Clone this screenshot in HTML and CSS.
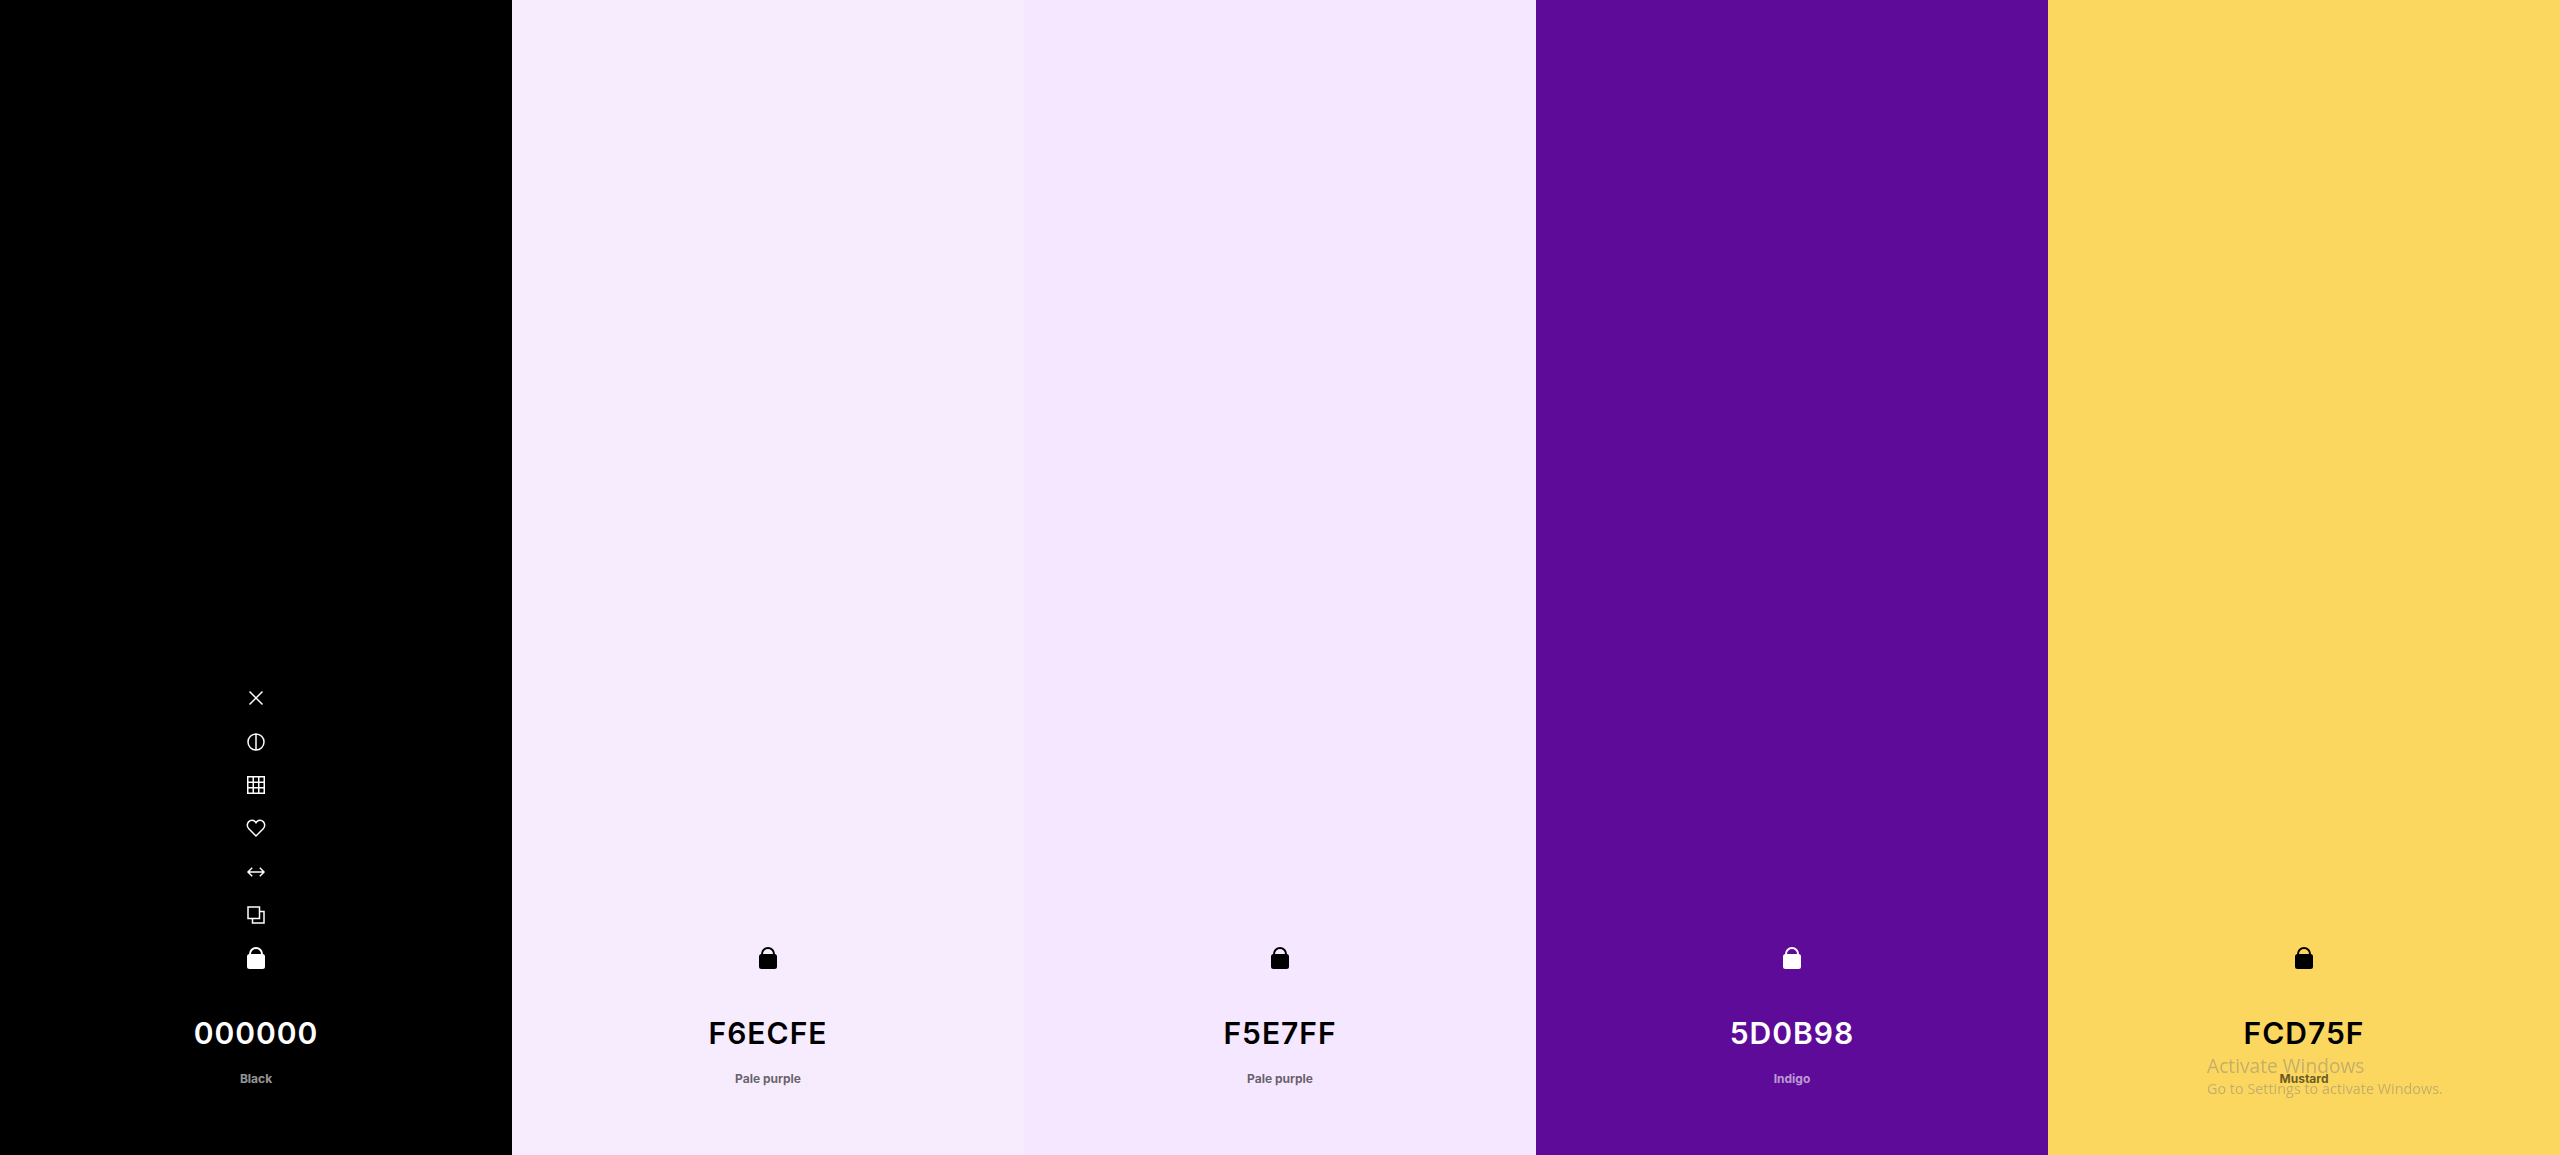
FILE: index.html
```html
<!DOCTYPE html>
<html lang="en">
<head>
<meta charset="utf-8">
<title>Palette</title>
<link rel="stylesheet" href="styles.css">
</head>
<body>
<main class="palette">
  <section class="swatch swatch-dark black">
    <div class="tools">
      <span class="tool"><svg viewBox="0 0 18 18"><path d="M2.500 2.500l13 13M15.500 2.500l-13 13"/></svg></span>
      <span class="tool"><svg viewBox="0 0 18 18"><circle cx="9" cy="9" r="8"/><path d="M9 1v16"/></svg></span>
      <span class="tool"><svg viewBox="0 0 18 18"><path d="M.75.75h16.5v16.5H.75zM6.25.75v16.5M11.75.75v16.5M.75 6.25h16.5M.75 11.75h16.5"/></svg></span>
      <span class="tool"><svg viewBox="0 0 18 18"><path d="M9 17L1.800 9.700C-.2 7.700-.1 4.500 1.800 2.600 3.800.7 6.900.9 8.500 3L9 3.700l.5-.7c1.600-2.100 4.700-2.300 6.700-.4 1.900 1.900 2 5.100 0 7.100z"/></svg></span>
      <span class="tool"><svg viewBox="0 0 18 18"><path d="M1.500 9h15M5.200 4.800L1 9l4.200 4.200M12.800 4.800L17 9l-4.200 4.200"/></svg></span>
      <span class="tool"><svg viewBox="0 0 18 18"><path d="M1 1h11.500v11.500H1zM12.500 5.500h4.500v11.500H5.500v-4.500"/></svg></span>
      <span class="tool"><svg class="lock" viewBox="0 0 18 22"><path class="shackle" d="M3 8V7a6 6 0 0 1 12 0v1"/><rect class="body" x="0" y="7" width="18" height="15" rx="2.500"/></svg></span>
    </div>
    <h2 class="hex">000000</h2>
    <p class="name">Black</p>
  </section>
  <section class="swatch pale-one">
    <div class="tools">
      <span class="tool"><svg class="lock" viewBox="0 0 18 22"><path class="shackle" d="M3 8V7a6 6 0 0 1 12 0v1"/><rect class="body" x="0" y="7" width="18" height="15" rx="2.500"/></svg></span>
    </div>
    <h2 class="hex">F6ECFE</h2>
    <p class="name">Pale purple</p>
  </section>
  <section class="swatch pale-two">
    <div class="tools">
      <span class="tool"><svg class="lock" viewBox="0 0 18 22"><path class="shackle" d="M3 8V7a6 6 0 0 1 12 0v1"/><rect class="body" x="0" y="7" width="18" height="15" rx="2.500"/></svg></span>
    </div>
    <h2 class="hex">F5E7FF</h2>
    <p class="name">Pale purple</p>
  </section>
  <section class="swatch swatch-dark indigo">
    <div class="tools">
      <span class="tool"><svg class="lock" viewBox="0 0 18 22"><path class="shackle" d="M3 8V7a6 6 0 0 1 12 0v1"/><rect class="body" x="0" y="7" width="18" height="15" rx="2.500"/></svg></span>
    </div>
    <h2 class="hex">5D0B98</h2>
    <p class="name">Indigo</p>
  </section>
  <section class="swatch mustard">
    <div class="tools">
      <span class="tool"><svg class="lock" viewBox="0 0 18 22"><path class="shackle" d="M3 8V7a6 6 0 0 1 12 0v1"/><rect class="body" x="0" y="7" width="18" height="15" rx="2.500"/></svg></span>
    </div>
    <h2 class="hex">FCD75F</h2>
    <p class="name">Mustard</p>
  </section>
</main>
<aside class="watermark">
  <p class="watermark-title">Activate Windows</p>
  <p class="watermark-text">Go to Settings to activate Windows.</p>
</aside>
</body>
</html>
```
FILE: styles.css
```css
* { box-sizing: border-box; margin: 0; padding: 0; }
html, body { height: 100%; overflow: hidden; }
body { font-family: Inter, "Liberation Sans", sans-serif; background: #000; }
.palette { display: grid; grid-template-columns: repeat(5, 1fr); height: 1155px; }
.swatch {
  display: flex; flex-direction: column; align-items: center; justify-content: flex-end;
  padding-bottom: 69px; color: #000;
}
.swatch-dark { color: #fff; }
.black { background: #000; }
.pale-one { background: #f6ecfe; }
.pale-two { background: #f5e7ff; }
.indigo { background: #5d0b98; }
.mustard { background: #fcd75f; }
.tools { display: flex; flex-direction: column; align-items: center; }
.tool { display: flex; align-items: center; justify-content: center; width: 24px; height: 43.33px; }
.tool svg { width: 18px; height: 18px; fill: none; stroke: currentColor; stroke-width: 1.500; display: block; overflow: visible; }
.tool .lock { width: 18px; height: 22px; }
.lock .body { fill: currentColor; stroke: none; }
.lock .shackle { stroke-width: 2; }
.hex { margin-top: 34px; font-size: 30px; line-height: 39px; font-weight: 600; letter-spacing: 1px; }
.name { margin-top: 18px; font-size: 12px; line-height: 15px; font-weight: 700; opacity: .58; }
.watermark { position: fixed; left: 2207px; top: 1052px; color: rgba(120, 120, 120, .42); font-family: "Open Sans", sans-serif; }
.watermark-title { font-size: 19.200px; line-height: 27px; }
.watermark-text { font-size: 14.400px; line-height: 20px; }
```
